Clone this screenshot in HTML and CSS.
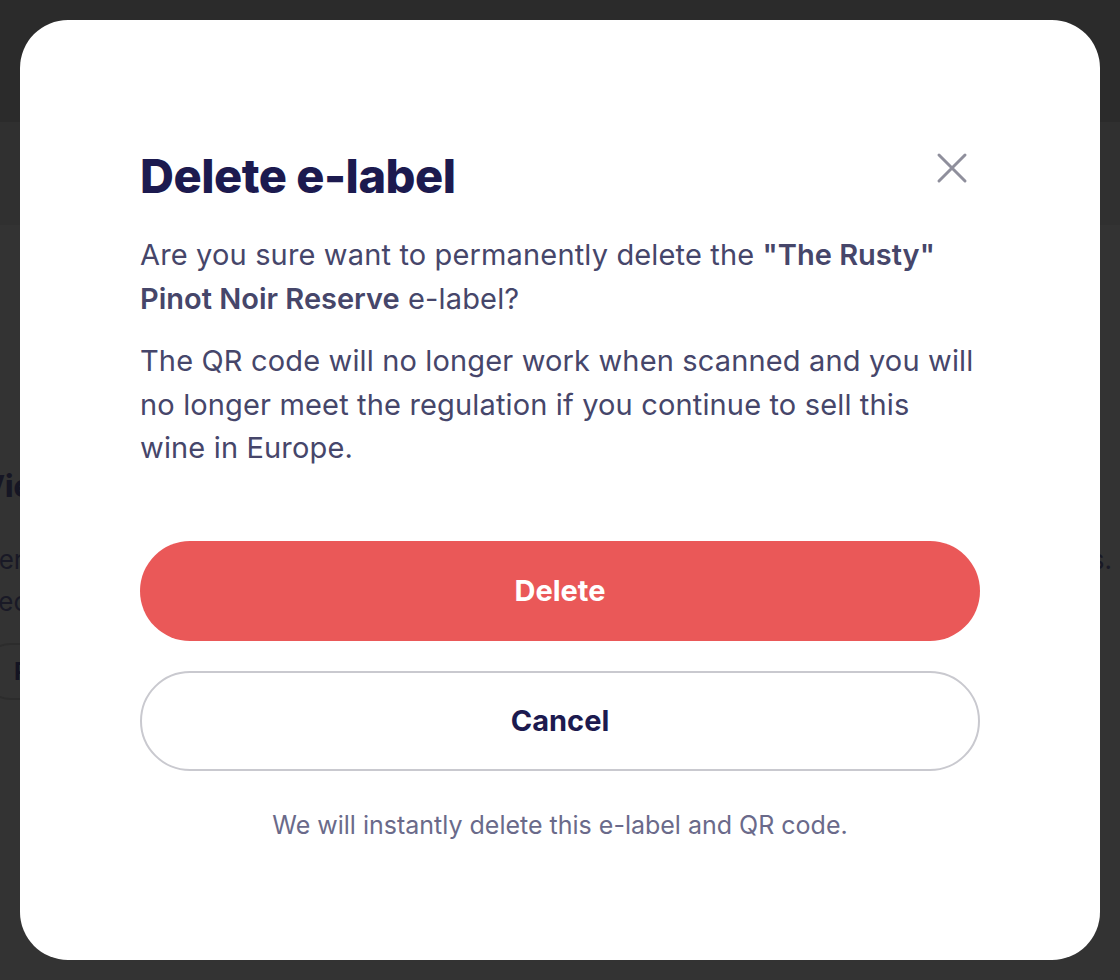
FILE: index.html
```html
<!DOCTYPE html>
<html lang="en">
<head>
<meta charset="utf-8">
<title>Delete e-label</title>
<link rel="stylesheet" href="styles.css">
</head>
<body>
<div class="page">
  <header class="topbar"></header>
  <div class="subbar"></div>
  <main class="content">
    <h2 class="ghost-title">View</h2>
    <div class="ghost-line"><span>Server-side scanned labels</span><span>and regulations.</span></div>
    <div class="ghost-line"><span>Received</span></div>
    <div class="ghost-row"><span class="ghost-btn">Print</span></div>
  </main>
</div>

<div class="modal" role="dialog" aria-labelledby="modal-title">
  <div class="modal-head">
    <h1 id="modal-title" class="modal-title">Delete e-label</h1>
    <button class="close" aria-label="Close">
      <svg width="32" height="32" viewBox="0 0 32 32"><path d="M3 3L29 29M29 3L3 29" stroke="#8f8f9c" stroke-width="3" stroke-linecap="round" fill="none"/></svg>
    </button>
  </div>
  <p class="modal-text">Are you sure want to permanently delete the <strong>"The Rusty" Pinot Noir Reserve</strong> e-label?</p>
  <p class="modal-text">The QR code will no longer work when scanned and you will no longer meet the regulation if you continue to sell this wine in Europe.</p>
  <div class="actions">
    <button class="btn btn-danger">Delete</button>
    <button class="btn btn-outline">Cancel</button>
  </div>
  <p class="note">We will instantly delete this e-label and QR code.</p>
</div>
</body>
</html>
```
FILE: styles.css
```css
* { box-sizing: border-box; }
html, body { margin: 0; padding: 0; }
body {
  background: #333333;
  font-family: "Inter", "Noto Sans", sans-serif;
  width: 1120px;
  height: 980px;
  overflow: hidden;
}
.page { display: flex; flex-direction: column; }
.topbar { height: 122px; background: #2b2b2b; }
.subbar { height: 103px; background: #303030; }
.content { padding: 246px 8px 0 0; margin-left: -18px; color: #161624; }
.ghost-title { margin: 0; font-size: 30px; font-weight: 800; line-height: 30px; }
.ghost-line { display: flex; justify-content: space-between; font-size: 26px; line-height: 42px; color: #191926; }
.ghost-title + .ghost-line { margin-top: 38px; }
.ghost-row { display: flex; margin-top: 20px; }
.ghost-btn { border: 2px solid #2c2c2c; border-radius: 30px; padding: 12px 30px 12px 30px; font-size: 24px; font-weight: 700; color: #141422; }

.modal {
  position: fixed;
  left: 20px; top: 20px;
  width: 1080px; height: 940px;
  background: #ffffff;
  border-radius: 48px;
  padding: 128px 120px 0 120px;
  display: flex;
  flex-direction: column;
}
.modal-head { display: flex; justify-content: space-between; align-items: flex-start; }
.modal-title {
  margin: 0;
  font-size: 47px;
  line-height: 56px;
  font-weight: 800;
  color: #1c1a4f;
  letter-spacing: -0.5px;
}
.close { background: none; border: 0; padding: 0; margin: 4px 12px 0 0; width: 32px; height: 32px; cursor: pointer; display: flex; }
.modal-text {
  margin: 29px 0 0;
  font-size: 29px;
  line-height: 43.5px;
  letter-spacing: 0.15px;
  color: #46466a;
}
.modal-text + .modal-text { margin-top: 19px; }
.modal-text strong { font-weight: 600; letter-spacing: 0; }
.actions { display: flex; flex-direction: column; gap: 30px; margin-top: 71px; }
.btn {
  height: 100px;
  border-radius: 50px;
  font-family: inherit;
  font-size: 29px;
  font-weight: 700;
  cursor: pointer;
}
.btn-danger { background: #ea5858; color: #ffffff; border: 0; }
.btn-outline { background: #ffffff; color: #1c1a4f; border: 2px solid #c9c9cf; }
.note { margin: 39px 0 0; text-align: center; font-size: 25px; color: #6a6a8a; line-height: 30px; }
```
